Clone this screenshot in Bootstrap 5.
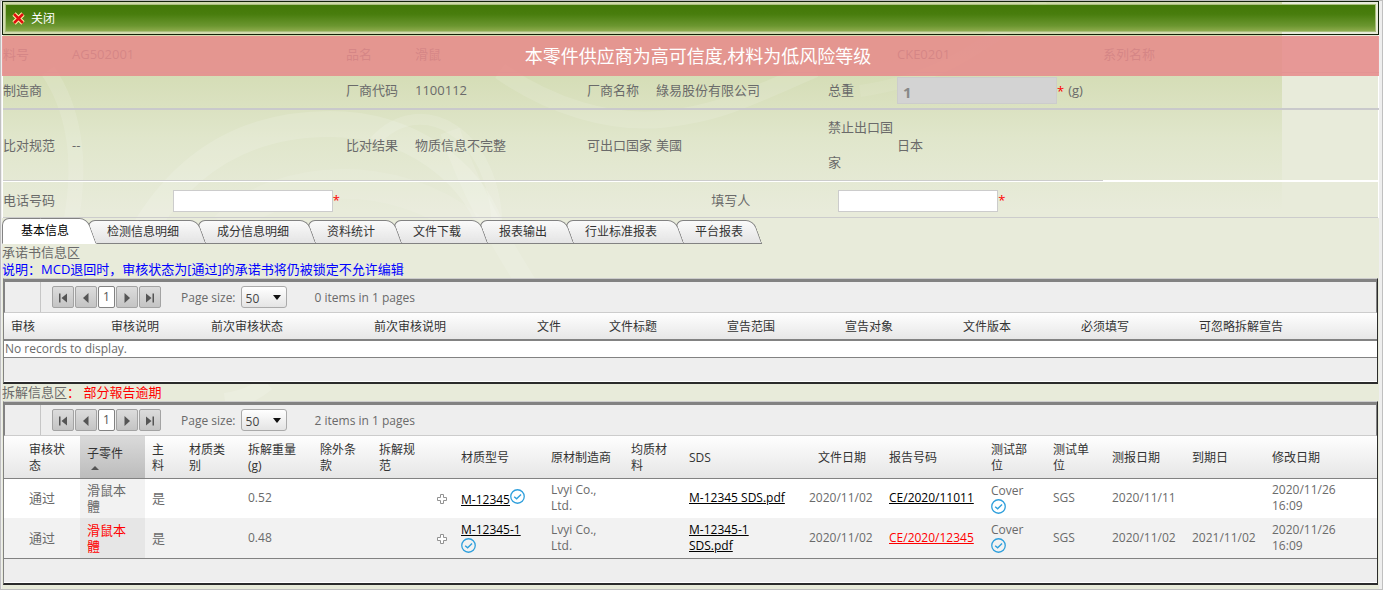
<!DOCTYPE html>
<html lang="zh-CN">
<head>
<meta charset="utf-8">
<meta name="viewport" content="width=device-width, initial-scale=1">
<title>材料信息</title>
<link href="https://cdn.jsdelivr.net/npm/bootstrap@5.3.0/dist/css/bootstrap.min.css" rel="stylesheet">
<script src="https://cdn.jsdelivr.net/npm/bootstrap@5.3.0/dist/js/bootstrap.bundle.min.js" defer></script>
<style>
body{font:13px/17px "Open Sans","Noto Sans CJK SC",sans-serif;color:#6a6a6a;background:#eee}
.page-frame{min-height:100vh;border:1px solid #c0c0c0;padding:0 3px 0 1px;background:#eee}
.sheet{isolation:isolate;background:#e8ebda;min-height:588px}
.backdrop{top:0;left:0;z-index:-1}
.toolbar{height:34px;border:1px solid #14240a;padding:2px}
.toolbar-fill{border:1px solid #a9bf7c;background:linear-gradient(#437807,#487d0d 35%,#6b9630 80%,#8dab4c);padding-left:6px}
.toolbar button{color:#fff;font-size:12px;line-height:17px;gap:6px}
.banner{left:0;right:0;top:35px;height:40px;background:rgba(231,138,138,.86);color:#fff;font-size:18px;padding-left:15px}
.info-wrap{padding-top:2px;border:solid #fff;border-width:0 1px}
.info{table-layout:fixed;width:100%}
.info td,.info th{padding:0;font-weight:400;line-height:35px;height:35px}
.info .w1{width:69px}.info .w2{width:274px}.info .w3{width:172px}.info .w4{width:206px}.info .w5{width:207px}
.info .r1>*{border-bottom:1px solid #ccc}
.info .r2>*{border-bottom:2px solid #c9c9cb}
.info .r3>*{border-bottom:1px solid #ccc}
.info .r3>.blank{border-bottom-color:#fff}
.contact{border-top:1px solid #fff;border-bottom:1px solid #ccc;height:37px;padding-top:2px}
.contact .c1{width:12.35%}.contact .c2{width:39.15%}.contact .c3{width:9.25%}
.field{width:160px;height:22px;border:1px solid #ccc;background:#fff;padding:0 5px}
.field.weight{height:27px;background:#d3d3d3;color:#888;font-size:15px;font-weight:700;padding-top:3px}
.req{color:#f00;line-height:20px}
.tabs{height:26px;padding:0}
.tabs li{padding-top:2px;position:relative}
.tabs button{position:relative;isolation:isolate;height:24px;padding:0 19px;border:0;background:none;font-size:12px;color:#333;line-height:22px}
.tabs button::before,.tabs button::after{content:"";position:absolute;z-index:-1;top:0;bottom:0;border:1px solid #828282;background:linear-gradient(#fafafa,#e4e4e4)}
.tabs button::before{left:0;right:14px;border-right:0;border-top-left-radius:7px}
.tabs button::after{left:50%;right:-4px;border-left:0;border-top-right-radius:8px;transform:skewX(20deg)}
.tabs li:nth-child(1){z-index:9;padding-top:0}.tabs li:nth-child(2){z-index:8}.tabs li:nth-child(3){z-index:7}.tabs li:nth-child(4){z-index:6}
.tabs li:nth-child(5){z-index:5}.tabs li:nth-child(6){z-index:4}.tabs li:nth-child(7){z-index:3}.tabs li:nth-child(8){z-index:2}
.tabs li:last-child button{padding-right:10px}
.tabs li:first-child button{height:26px;color:#000;line-height:26px}
.tabs li:first-child button::before,.tabs li:first-child button::after{background:#fff;border-bottom-color:#fff}
.note{color:#00f}.alert-text{color:#f00}
.data-grid{margin:0 1px;border:1px solid #828282;border-top-color:#ccc;border-right-color:#2b2b2b;border-bottom:2px solid #2b2b2b;background:#eee}
.pager{height:34px;border-top:3px solid #828282;border-bottom:1px solid #ccc;border-left:1px solid #828282;border-right:1px solid #828282;font-size:12px}
.pager .lead-cell{width:36px;border-right:1px solid #c6c6c6}
.pager-buttons{gap:1px;margin-left:11px}
.pager button{width:22px;height:22px;border:1px solid #a3a3a3;border-radius:2px;background:linear-gradient(#dcdcdc,#c4c4c4);padding:0;color:#555}
.pager button.current{width:17px;background:#fff;border-color:#828282;color:#555;line-height:18px}
.pager label{margin-right:5px}
.pager select{width:46px;height:22px;border:1px solid #aaa;border-radius:3px;appearance:none;padding:2px 4px 0;color:#444;font-size:12px;line-height:17px;background:url("data:image/svg+xml,%3Csvg xmlns='http://www.w3.org/2000/svg' width='8' height='5'%3E%3Cpath d='M0 0h8L4 5z' fill='%23111'/%3E%3C/svg%3E") no-repeat right 5px center,linear-gradient(#fff,#e4e4e4)}
.records{width:100%;table-layout:fixed;font-size:12px;line-height:16px}
.records th{font-weight:400;color:#333;padding:2px 7px 0;border-bottom:1px solid #828282}
.records thead{background:linear-gradient(#fefefe,#e6e6e6)}
.records td{padding:0 7px}
.records .cjk{font-size:13px}
.pledges th{height:27px;border-bottom-width:2px}
.pledges td{height:17px;padding:0 1px;background:#fff;border-bottom:1px solid #828282}
.pledges .a{width:100px}.pledges .b{width:163px}.pledges .c{width:72px}.pledges .d{width:118px}.pledges .e{width:185px}
.parts th{height:42px}
.parts tbody tr{height:40px;background:#fff}
.parts tbody tr+tr{background:#f2f2f2}
.parts tbody{border-bottom:1px solid #828282}
.parts .s18{width:18px}.parts .s24{width:24px}.parts .s37{width:37px}.parts .s58{width:58px}.parts .s59{width:59px}.parts .s65{width:65px}.parts .s72{width:72px}
.parts .s80{width:80px}.parts .s90{width:90px}.parts .s102{width:102px}.parts .s120{width:120px}.parts .s62{width:62px}.parts .s112{width:112px}
.parts th.sorted{background:linear-gradient(#dadada,#bcbcbc)}
.parts td.sorted{background:#f2f2f2}
.parts tr+tr td.sorted{background:#e6e6e6}
.parts a{color:#000;text-decoration:underline}
.parts a.late{color:#f00}
.parts svg{display:inline-block}
.grid-foot{height:24px;border-bottom:1px solid #fff}
</style>
</head>
<body>
<svg class="d-none" aria-hidden="true">
<symbol id="tick" viewBox="0 0 14 14"><circle cx="7" cy="7" r="6.3" fill="none" stroke="#2e9fdc" stroke-width="1.2"/><path d="M3.9 7.2 6.2 9.2 10.3 5.2" fill="none" stroke="#2e9fdc" stroke-width="1.3"/></symbol>
<symbol id="plus" viewBox="0 0 10 10"><path d="M3.5.5h3v3h3v3h-3v3h-3v-3h-3v-3h3z" fill="#fff" stroke="#929292"/></symbol>
<symbol id="first" viewBox="0 0 10 10"><path d="M1 .5h1.500v9H1zM9 .5v9L3.500 5z" fill="#555"/></symbol>
<symbol id="prev" viewBox="0 0 10 10"><path d="M7.500 0v10L2 5z" fill="#555"/></symbol>
<symbol id="next" viewBox="0 0 10 10"><path d="M2.500 0v10L8 5z" fill="#555"/></symbol>
<symbol id="last" viewBox="0 0 10 10"><path d="M7.500.5H9v9H7.500zM1 .5v9l5.500-4.500z" fill="#555"/></symbol>
</svg>
<div class="page-frame">
<div class="sheet position-relative">
<svg class="backdrop position-absolute" width="1280" height="420" viewBox="2 0 1280 420" aria-hidden="true">
<defs><linearGradient id="sky" x1="0" y1="0" x2="0" y2="1"><stop offset="0" stop-color="#cfd9a9"/><stop offset=".35" stop-color="#d5ddb6"/><stop offset=".65" stop-color="#e0e6cb"/><stop offset="1" stop-color="#e8ebda"/></linearGradient></defs>
<path d="M2 0h1280v210H2z" fill="url(#sky)"/>
<g fill="none" stroke="#fff">
<path d="M48 70c24 35 35 85 23 150" stroke-width="15" opacity=".12"/>
<path d="M146 226c40-65 100-103 184-103s140 50 160 100" stroke-width="26" opacity=".14"/>
<path d="M225 226c55-55 170-60 245 0" stroke-width="30" opacity=".09"/>
<path d="M375 140c45-50 120-10 122 85" stroke-width="11" opacity=".13"/>
<path d="M500 70c50 35 110 54 165 48s80-20 150-50" stroke-width="17" opacity=".12"/>
<path d="M860 90c70-10 110-35 185-90" stroke-width="12" opacity=".08"/>
<path d="M450 130C470 190 500 240 528 285" stroke-width="20" opacity=".12"/>
<path d="M225 400c20-3 30-8 42-18" stroke-width="16" opacity=".15"/>
</g>
</svg>
<header class="toolbar">
<div class="toolbar-fill h-100 d-flex align-items-center">
<button type="button" class="btn p-0 border-0 d-flex align-items-center"><svg width="13" height="13" viewBox="0 0 13 13" aria-hidden="true"><path d="M2 2l9 9M11 2l-9 9" stroke="#ffefa0" stroke-width="4.600"/><path d="M2 2l9 9M11 2l-9 9" stroke="#e01010" stroke-width="2.500"/></svg>关闭</button>
</div>
</header>
<div class="info-wrap">
<table class="info">
<colgroup><col class="w1"><col class="w2"><col class="w1"><col class="w3"><col class="w1"><col class="w3"><col class="w1"><col class="w4"><col class="w1"><col class="w5"></colgroup>
<tbody>
<tr class="r1"><th>料号</th><td>AG502001</td><th>品名</th><td>滑鼠</td><th></th><td></td><th></th><td>CKE0201</td><th>系列名称</th><td></td></tr>
<tr class="r2"><th>制造商</th><td></td><th>厂商代码</th><td>1100112</td><th>厂商名称</th><td>綠易股份有限公司</td><th><label for="weight">总重</label></th><td colspan="3"><div class="d-flex align-items-center"><input id="weight" class="field weight" value="1" readonly><span class="req">*</span><span class="ms-1">(g)</span></div></td></tr>
<tr class="r3"><th>比对规范</th><td>--</td><th>比对结果</th><td>物质信息不完整</td><th>可出口国家</th><td>美國</td><th>禁止出口国家</th><td>日本</td><td class="blank" colspan="2"></td></tr>
</tbody>
</table>
<div class="contact d-flex align-items-center">
<label class="c1" for="phone">电话号码</label><div class="c2 d-flex"><input id="phone" class="field"><span class="req">*</span></div>
<label class="c3" for="writer">填写人</label><div class="d-flex"><input id="writer" class="field"><span class="req">*</span></div>
</div>
</div>
<div class="banner position-absolute d-flex align-items-center justify-content-center">本零件供应商为高可信度,材料为低风险等级</div>
<ul class="tabs list-unstyled d-flex mb-0">
<li><button type="button">基本信息</button></li><li><button type="button">检测信息明细</button></li><li><button type="button">成分信息明细</button></li><li><button type="button">资料统计</button></li><li><button type="button">文件下载</button></li><li><button type="button">报表输出</button></li><li><button type="button">行业标准报表</button></li><li><button type="button">平台报表</button></li>
</ul>
<div>承诺书信息区</div>
<div class="note">说明：MCD退回时，审核状态为[通过]的承诺书将仍被锁定不允许编辑</div>
<section class="data-grid">
<div class="pager d-flex align-items-center">
<span class="lead-cell h-100"></span>
<div class="pager-buttons d-flex">
<button type="button" aria-label="First"><svg width="10" height="10"><use href="#first"/></svg></button><button type="button" aria-label="Previous"><svg width="10" height="10"><use href="#prev"/></svg></button><button type="button" class="current">1</button><button type="button" aria-label="Next"><svg width="10" height="10"><use href="#next"/></svg></button><button type="button" aria-label="Last"><svg width="10" height="10"><use href="#last"/></svg></button>
</div>
<label class="ms-3 ps-1" for="size1">Page size:</label><select id="size1"><option>50</option></select>
<span class="ms-4 ps-1">0 items in 1 pages</span>
</div>
<table class="records pledges">
<colgroup><col class="a"><col class="a"><col class="b"><col class="b"><col class="c"><col class="d"><col class="d"><col class="d"><col class="d"><col class="d"><col class="e"></colgroup>
<thead><tr><th>审核</th><th>审核说明</th><th>前次审核状态</th><th>前次审核说明</th><th>文件</th><th>文件标题</th><th>宣告范围</th><th>宣告对象</th><th>文件版本</th><th>必须填写</th><th>可忽略拆解宣告</th></tr></thead>
<tbody><tr><td colspan="11">No records to display.</td></tr></tbody>
</table>
<div class="grid-foot"></div>
</section>
<div>拆解信息区<span class="alert-text">： 部分報告逾期</span></div>
<section class="data-grid">
<div class="pager d-flex align-items-center">
<span class="lead-cell h-100"></span>
<div class="pager-buttons d-flex">
<button type="button" aria-label="First"><svg width="10" height="10"><use href="#first"/></svg></button><button type="button" aria-label="Previous"><svg width="10" height="10"><use href="#prev"/></svg></button><button type="button" class="current">1</button><button type="button" aria-label="Next"><svg width="10" height="10"><use href="#next"/></svg></button><button type="button" aria-label="Last"><svg width="10" height="10"><use href="#last"/></svg></button>
</div>
<label class="ms-3 ps-1" for="size2">Page size:</label><select id="size2"><option>50</option></select>
<span class="ms-4 ps-1">2 items in 1 pages</span>
</div>
<table class="records parts">
<colgroup><col class="s18"><col class="s58"><col class="s65"><col class="s37"><col class="s59"><col class="s72"><col class="s59"><col class="s58"><col class="s24"><col class="s90"><col class="s80"><col class="s58"><col class="s120"><col class="s80"><col class="s102"><col class="s62"><col class="s59"><col class="s80"><col class="s80"><col class="s112"></colgroup>
<thead><tr><th></th><th>审核状态</th><th class="sorted">子零件<svg class="d-block ms-1 mt-1" width="8" height="4" viewBox="0 0 8 4"><path d="M0 4h8L4 0z" fill="#555"/></svg></th><th>主料</th><th>材质类别</th><th>拆解重量(g)</th><th>除外条款</th><th>拆解规范</th><th></th><th>材质型号</th><th>原材制造商</th><th>均质材料</th><th>SDS</th><th class="text-center">文件日期</th><th>报告号码</th><th>测试部<br>位</th><th>测试单<br>位</th><th>测报日期</th><th>到期日</th><th>修改日期</th></tr></thead>
<tbody>
<tr><td></td><td class="cjk">通过</td><td class="cjk sorted">滑鼠本<br>體</td><td class="cjk">是</td><td></td><td>0.52</td><td></td><td></td><td><svg width="10" height="10"><use href="#plus"/></svg></td><td class="text-nowrap"><a href="#">M-12345</a><svg class="align-text-bottom mb-1" width="15" height="15"><use href="#tick"/></svg></td><td>Lvyi Co.,<br>Ltd.</td><td></td><td class="text-nowrap"><a href="#">M-12345 SDS.pdf</a></td><td>2020/11/02</td><td><a href="#">CE/2020/11011</a></td><td>Cover<br><svg class="d-block" width="15" height="15"><use href="#tick"/></svg></td><td>SGS</td><td>2020/11/11</td><td></td><td>2020/11/26<br>16:09</td></tr>
<tr><td></td><td class="cjk">通过</td><td class="cjk sorted alert-text">滑鼠本<br>體</td><td class="cjk">是</td><td></td><td>0.48</td><td></td><td></td><td><svg width="10" height="10"><use href="#plus"/></svg></td><td><a href="#" class="text-nowrap">M-12345-1</a><br><svg class="d-block" width="15" height="15"><use href="#tick"/></svg></td><td>Lvyi Co.,<br>Ltd.</td><td></td><td><a href="#">M-12345-1<br>SDS.pdf</a></td><td>2020/11/02</td><td><a href="#" class="late">CE/2020/12345</a></td><td>Cover<br><svg class="d-block" width="15" height="15"><use href="#tick"/></svg></td><td>SGS</td><td>2020/11/02</td><td>2021/11/02</td><td>2020/11/26<br>16:09</td></tr>
</tbody>
</table>
<div class="grid-foot"></div>
</section>
</div>
</div>
</body>
</html>
